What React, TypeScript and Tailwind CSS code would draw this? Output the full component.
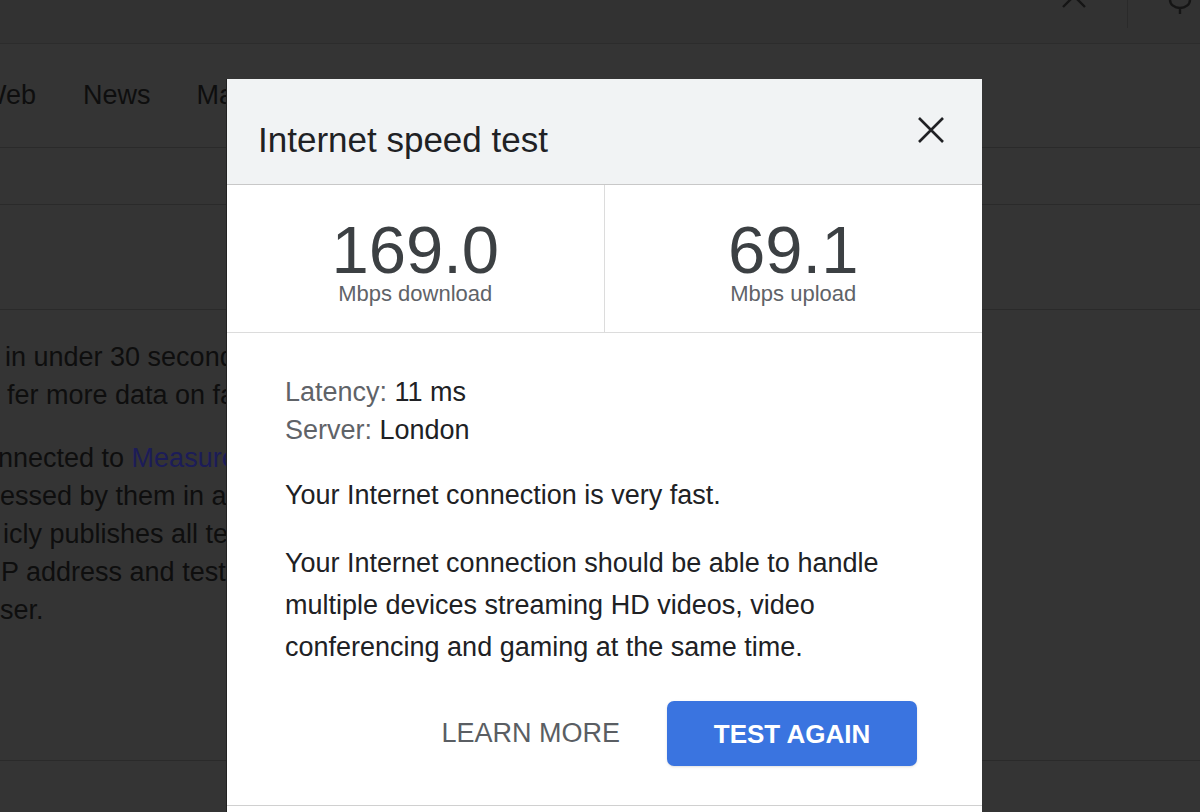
import React from "react";

const bgLines: { text: React.ReactNode; pad: string }[] = [
  { text: "in under 30 seconds", pad: "pl-[5px]" },
  { text: "fer more data on faster", pad: "pl-[7px]" },
];

const bgLines2: { text: React.ReactNode; pad: string }[] = [
  {
    text: (
      <>
        nnected to <span className="text-[#1c1c58]">Measurement</span>
      </>
    ),
    pad: "-ml-[2px]",
  },
  { text: "essed by them in accordance", pad: "pl-0" },
  { text: "icly publishes all test results", pad: "pl-[3px]" },
  { text: "P address and test results", pad: "pl-[1px]" },
  { text: "ser.", pad: "pl-0" },
];

const SpeedTestModal: React.FC = () => {
  return (
    <div className="absolute left-[226px] top-[79px] w-[756px] bg-white border-l border-[#222]">
      {/* Header */}
      <div className="flex justify-between items-start h-[106px] bg-[#f1f3f4] border-b border-[#c8c8c8]">
        <h1 className="mt-[43px] ml-[31px] text-[35px] leading-none text-[#202124]">
          Internet speed test
        </h1>
        <svg
          className="mt-[38px] mr-[38px]"
          width="26"
          height="26"
          viewBox="0 0 26 26"
          fill="none"
          stroke="#202124"
          strokeWidth="2.6"
        >
          <path d="M1 1 L25 25 M25 1 L1 25" />
        </svg>
      </div>

      {/* Stats */}
      <div className="grid grid-cols-2 h-[148px] border-b border-[#dcdcdc]">
        <div className="flex flex-col items-center pt-[31px] border-r border-[#dcdcdc]">
          <div className="text-[67px] leading-none text-[#3c4043]">169.0</div>
          <div className="text-[22px] leading-none text-[#5f6368]">Mbps download</div>
        </div>
        <div className="flex flex-col items-center pt-[31px]">
          <div className="text-[67px] leading-none text-[#3c4043]">69.1</div>
          <div className="text-[22px] leading-none text-[#5f6368]">Mbps upload</div>
        </div>
      </div>

      {/* Body */}
      <div className="pl-[58px] pr-[40px] pt-[40px] text-[27px] text-[#202124]">
        <div className="leading-[38px]">
          <span className="text-[#5f6368]">Latency:</span> 11 ms
        </div>
        <div className="leading-[38px]">
          <span className="text-[#5f6368]">Server:</span> London
        </div>
        <p className="mt-[27px] leading-[38px]">Your Internet connection is very fast.</p>
        <p className="mt-[28px] leading-[42px] w-[620px]">
          Your Internet connection should be able to handle multiple devices streaming HD
          videos, video conferencing and gaming at the same time.
        </p>
      </div>

      {/* Actions */}
      <div className="flex justify-end items-center gap-[47px] pt-[33px] pb-[39px] pr-[65px] border-b border-[#d0d0d0]">
        <button className="text-[27px] leading-none text-[#5a5e63]">LEARN MORE</button>
        <button className="w-[250px] h-[65px] rounded-[7px] bg-[#3a74e0] text-white text-[26px] font-semibold leading-none shadow-sm">
          TEST AGAIN
        </button>
      </div>
      <div className="h-[40px]" />
    </div>
  );
};

export default function App() {
  return (
    <div
      className="relative w-[1200px] h-[812px] overflow-hidden bg-[#343434] text-[#0e0e0e]"
      style={{ fontFamily: '"Liberation Sans", Arial, sans-serif' }}
    >
      {/* Top search bar */}
      <div className="h-[44px] bg-[#323232] border-b border-[#2c2c2c] flex justify-end items-start">
        <svg className="-mt-[16px] mr-[41px]" width="24" height="24" viewBox="0 0 24 24" fill="none" stroke="#151515" strokeWidth="2.4">
          <path d="M1 1 L23 23 M23 1 L1 23" />
        </svg>
        <div className="w-px h-[28px] bg-[#2a2a2a] mr-[40px]" />
        <svg className="mr-[8px]" width="24" height="14" viewBox="0 0 24 14" fill="none" stroke="#151515" strokeWidth="2.4">
          <path d="M2 0 A10 8 0 0 0 22 0 M12 8 L12 14" />
        </svg>
      </div>

      {/* Tabs */}
      <div className="h-[104px] border-b border-[#2a2a2a] flex items-center text-[27px]">
        <span className="-ml-[19px]">Web</span>
        <span className="ml-[47px]">News</span>
        <span className="ml-[46px]">Maps</span>
      </div>

      <div className="h-[57px] border-b border-[#2a2a2a]" />
      <div className="h-[105px] border-b border-[#2a2a2a]" />

      {/* Background article text */}
      <div className="h-[451px] border-b border-[#2a2a2a] pt-[28px] text-[27px] leading-[38px] whitespace-nowrap">
        {bgLines.map((l, i) => (
          <div key={i} className={l.pad}>
            {l.text}
          </div>
        ))}
        <div className="h-[25px]" />
        {bgLines2.map((l, i) => (
          <div key={i} className={l.pad}>
            {l.text}
          </div>
        ))}
      </div>

      <SpeedTestModal />
    </div>
  );
}
